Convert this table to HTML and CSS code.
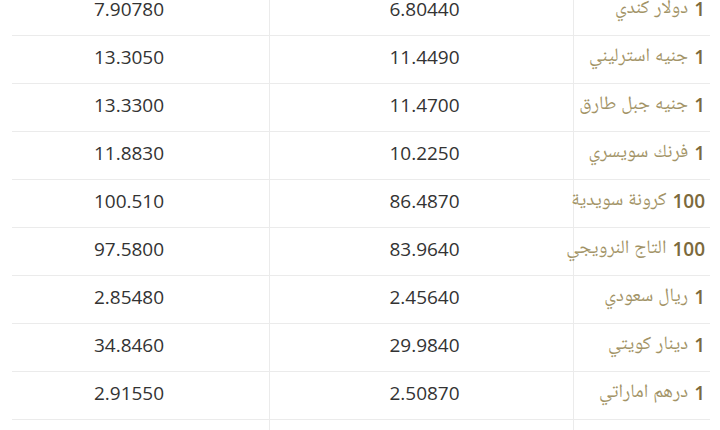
FILE: index.html
```html
<!DOCTYPE html>
<html lang="ar" dir="rtl">
<head>
<meta charset="utf-8">
<title>أسعار العملات</title>
<link rel="stylesheet" href="styles.css">
</head>
<body>
<div class="rates">
  <div class="row"><div class="cur"><b>1</b> دولار كندي</div><div class="num buy">6.80440</div><div class="num sell">7.90780</div></div>
  <div class="row"><div class="cur"><b>1</b> جنيه استرليني</div><div class="num buy">11.4490</div><div class="num sell">13.3050</div></div>
  <div class="row"><div class="cur"><b>1</b> جنيه جبل طارق</div><div class="num buy">11.4700</div><div class="num sell">13.3300</div></div>
  <div class="row"><div class="cur"><b>1</b> فرنك سويسري</div><div class="num buy">10.2250</div><div class="num sell">11.8830</div></div>
  <div class="row"><div class="cur"><b>100</b> كرونة سويدية</div><div class="num buy">86.4870</div><div class="num sell">100.510</div></div>
  <div class="row"><div class="cur"><b>100</b> التاج النرويجي</div><div class="num buy">83.9640</div><div class="num sell">97.5800</div></div>
  <div class="row"><div class="cur"><b>1</b> ريال سعودي</div><div class="num buy">2.45640</div><div class="num sell">2.85480</div></div>
  <div class="row"><div class="cur"><b>1</b> دينار كويتي</div><div class="num buy">29.9840</div><div class="num sell">34.8460</div></div>
  <div class="row"><div class="cur"><b>1</b> درهم اماراتي</div><div class="num buy">2.50870</div><div class="num sell">2.91550</div></div>
  <div class="row"><div class="cur"></div><div class="num buy"></div><div class="num sell"></div></div>
</div>
</body>
</html>
```
FILE: styles.css
```css
html, body {
  margin: 0;
  padding: 0;
  background: #ffffff;
  overflow: hidden;
}
body {
  width: 720px;
  height: 430px;
  font-family: "Open Sans", "Noto Sans", "Noto Naskh Arabic", "Noto Sans Arabic", "DejaVu Sans", sans-serif;
}
.rates {
  margin: -12px 10px 0 12px;
  direction: rtl;
}
.row {
  display: grid;
  grid-template-columns: 137px 304px 257px;
  height: 47px;
  border-bottom: 1px solid #ebebeb;
}
.row > div {
  display: flex;
  align-items: center;
  font-size: 19px;
  padding-bottom: 6px;
}
.cur {
  justify-content: flex-start;
  padding-right: 5px;
  color: #a29366;
  white-space: nowrap;
  border-left: 1px solid #ebebeb;
}
.cur b {
  font-weight: 600;
  color: #7c6a3c;
  margin-left: 6px;
}
.num {
  justify-content: center;
  color: #333333;
}
.buy {
  border-left: 1px solid #ebebeb;
  padding-left: 6px;
}
.sell {
  padding-right: 23px;
}
```
